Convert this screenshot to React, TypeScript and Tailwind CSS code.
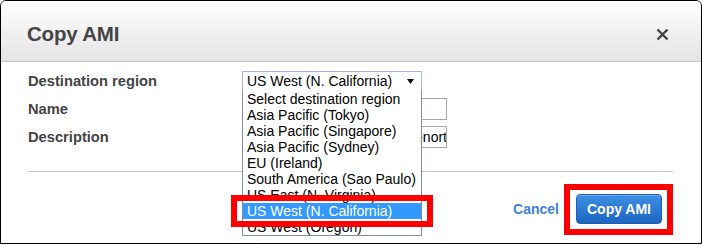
const regions = [
  "Select destination region",
  "Asia Pacific (Tokyo)",
  "Asia Pacific (Singapore)",
  "Asia Pacific (Sydney)",
  "EU (Ireland)",
  "South America (Sao Paulo)",
  "US East (N. Virginia)",
  "US West (N. California)",
  "US West (Oregon)",
];

function CloseIcon() {
  return (
    <svg width="13" height="13" viewBox="0 0 13 13" className="block">
      <path d="M1.5 1.5 L11.5 11.5 M11.5 1.5 L1.5 11.5" stroke="#444" strokeWidth="2.4" />
    </svg>
  );
}

function FormRow({ label, children }: { label: string; children: React.ReactNode }) {
  return (
    <div className="flex items-center">
      <div className="w-[214px] text-[14.7px] font-bold text-[#444]">{label}</div>
      {children}
    </div>
  );
}

export default function App() {
  return (
    <div className="w-[702px] h-[244px] bg-white border border-black rounded-t-[6px] overflow-hidden font-['Liberation_Sans',Arial,sans-serif]">
      <header className="h-[61px] flex items-center justify-between pl-[26px] pr-[32px] pt-[6px] border-b border-[#c9c9c9] bg-gradient-to-b from-white to-[#e4e4e4]">
        <h1 className="text-[20.5px] font-bold text-[#444] tracking-[-0.2px]">Copy AMI</h1>
        <CloseIcon />
      </header>

      <section className="relative px-[27px] pt-[8px]">
        <div className="flex flex-col gap-[6px]">
          <FormRow label="Destination region">
            <div className="w-[180px] h-[20px] border border-[#a4b3dc] flex items-center justify-between pl-[4px] pr-[7px] text-[14px] text-black">
              <span>US West (N. California)</span>
              <svg width="7" height="5" viewBox="0 0 7 5" className="block">
                <path d="M0 0 H7 L3.5 5 Z" fill="#111" />
              </svg>
            </div>
          </FormRow>
          <FormRow label="Name">
            <div className="w-[205px] h-[22px] border border-[#a9a9a9]" />
          </FormRow>
          <FormRow label="Description">
            <div className="w-[205px] h-[22px] border border-[#a9a9a9] flex justify-end items-center overflow-hidden text-[14px] text-black whitespace-nowrap">
              <span className="mr-[-1px]">[Copied ami-7f2e4a16 from us-east-1] amzn-ami-pv-2014.03.1.x86_64-ebs-nort</span>
            </div>
          </FormRow>
        </div>

        <div className="mt-[23px] border-t border-[#c4c4c4] mr-[1px]" />

        <div className="flex justify-end items-center gap-[17px] pt-[22px] pr-[12px]">
          <span className="text-[14px] font-bold text-[#3f80d8]">Cancel</span>
          <div className="relative">
            <button className="w-[86px] h-[30px] rounded-[4px] border border-[#1d5eae] bg-gradient-to-b from-[#3d90e3] to-[#1d65c2] text-white text-[14px] font-bold shadow-[inset_0_1px_0_rgba(255,255,255,0.25)]">
              Copy AMI
            </button>
            <div className="absolute left-[-12px] top-[-10px] w-[109px] h-[51px] border-[6px] border-[#ff0000]" />
          </div>
        </div>

        {/* open dropdown list */}
        <ul className="absolute left-[241px] top-[28px] w-[180px] border border-t-0 border-[#7f8ea9] bg-white pt-[1px] text-[14px] text-black">
          {regions.map((r) => (
            <li
              key={r}
              className={
                r === "US West (N. California)"
                  ? "h-[16px] leading-[16px] pl-[4px] bg-[#3399ff] text-white whitespace-nowrap"
                  : "h-[16px] leading-[16px] pl-[4px] whitespace-nowrap"
              }
            >
              {r}
            </li>
          ))}
        </ul>
        <div className="absolute left-[230px] top-[133px] w-[202px] h-[32px] border-[6px] border-[#ff0000]" />
      </section>
    </div>
  );
}
